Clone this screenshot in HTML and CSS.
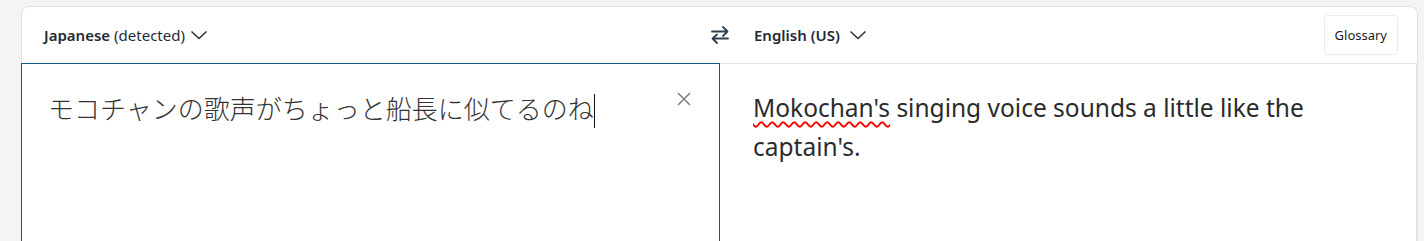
FILE: index.html
```html
<!DOCTYPE html>
<html lang="ja">
<head>
    <meta charset="UTF-8">
    <title>Translator</title>
    <link rel="stylesheet" href="styles.css">
</head>
<body>
    <div class="translator">
        <div class="lang-bar">
            <div class="lang-side source-side">
                <button class="lang-select">
                    <strong>Japanese</strong> (detected)
                    <svg class="chevron" width="18" height="10" viewBox="0 0 18 10"><path d="M1.5 1.5 L9 8.5 L16.5 1.5" fill="none" stroke="currentColor" stroke-width="1.6"/></svg>
                </button>
                <button class="swap-btn" title="Swap languages">
                    <svg width="20" height="22" viewBox="0 0 20 22"><path d="M2 7.5 H17 M13 3 L17.5 7.5 L13 12" fill="none" stroke="currentColor" stroke-width="1.8" stroke-linecap="round" stroke-linejoin="round"/><path d="M18 14.5 H3 M7 10.5 L2.5 14.5 L7 19" fill="none" stroke="currentColor" stroke-width="1.8" stroke-linecap="round" stroke-linejoin="round"/></svg>
                </button>
            </div>
            <div class="lang-side target-side">
                <button class="lang-select">
                    <strong>English (US)</strong>
                    <svg class="chevron" width="18" height="10" viewBox="0 0 18 10"><path d="M1.5 1.5 L9 8.5 L16.5 1.5" fill="none" stroke="currentColor" stroke-width="1.6"/></svg>
                </button>
                <button class="glossary-btn">Glossary</button>
            </div>
        </div>
        <div class="panes">
            <div class="pane source-pane">
                <p class="source-text">モコチャンの歌声がちょっと船長に似てるのね<span class="caret"></span></p>
                <button class="clear-btn" title="Clear">
                    <svg width="16" height="16" viewBox="0 0 16 16"><path d="M2 2 L14 14 M14 2 L2 14" fill="none" stroke="currentColor" stroke-width="1.5"/></svg>
                </button>
            </div>
            <div class="pane target-pane">
                <p class="target-text"><span class="misspelled">Mokochan's</span> singing voice sounds a little like the captain's.</p>
            </div>
        </div>
    </div>
</body>
</html>
```

FILE: styles.css
```css
:root {
    --border-light: #e1e2e6;
    --focus-blue: #0f5a87;
    --text-dark: #2b2b2b;
    --icon-slate: #2e3f52;
}

body {
    margin: 0;
    padding: 6px 6px 0 21px;
    background-color: #f4f4f4;
    font-family: 'Segoe UI', 'Noto Sans', sans-serif;
    color: var(--text-dark);
    overflow: hidden;
}

button {
    font-family: inherit;
    background: none;
    border: none;
    padding: 0;
    cursor: pointer;
    color: inherit;
}

.translator {
    background-color: white;
    border-radius: 8px 8px 0 0;
}

.lang-bar {
    display: grid;
    grid-template-columns: 699px 1fr;
    height: 56px;
    border: 1px solid var(--border-light);
    border-bottom: none;
    border-radius: 8px 8px 0 0;
}

.lang-side {
    display: flex;
    align-items: center;
}

.source-side {
    justify-content: space-between;
    padding-left: 22px;
}

.target-side {
    justify-content: space-between;
    padding-left: 33px;
    padding-right: 19px;
}

.lang-select {
    display: flex;
    align-items: center;
    font-size: 15px;
    color: #1f2a36;
}

.lang-select strong {
    font-weight: 600;
    margin-right: 4px;
}

.lang-select .chevron {
    margin-left: 5px;
    color: #333;
}

.swap-btn {
    display: flex;
    color: var(--icon-slate);
    margin-right: -9px;
}

.glossary-btn {
    font-size: 13px;
    height: 40px;
    padding: 0 10px;
    border: 1px solid #ececee;
    border-radius: 3px;
    color: #1b1b1b;
}

.panes {
    display: grid;
    grid-template-columns: 699px 1fr;
    height: 190px;
}

.pane {
    position: relative;
}

.source-pane {
    border: 1px solid var(--focus-blue);
    border-bottom: none;
}

.target-pane {
    border-top: 1px solid var(--border-light);
    border-right: 2px solid var(--border-light);
}

.source-text {
    margin: 0;
    padding: 24px 60px 0 26px;
    font-family: 'Noto Sans CJK JP', sans-serif;
    font-weight: 300;
    font-size: 26px;
    line-height: 39px;
    color: #333;
}

.caret {
    display: inline-block;
    width: 1px;
    height: 34px;
    background-color: #111;
    vertical-align: -9px;
}

.clear-btn {
    position: absolute;
    top: 27px;
    right: 27px;
    display: flex;
    color: #7a7f87;
}

.target-text {
    margin: 0;
    padding: 24px 60px 0 33px;
    font-size: 24.5px;
    line-height: 39px;
    color: var(--text-dark);
}

.misspelled {
    text-decoration: underline wavy #f00;
    text-decoration-thickness: 1.5px;
    text-underline-offset: 4px;
}
```
